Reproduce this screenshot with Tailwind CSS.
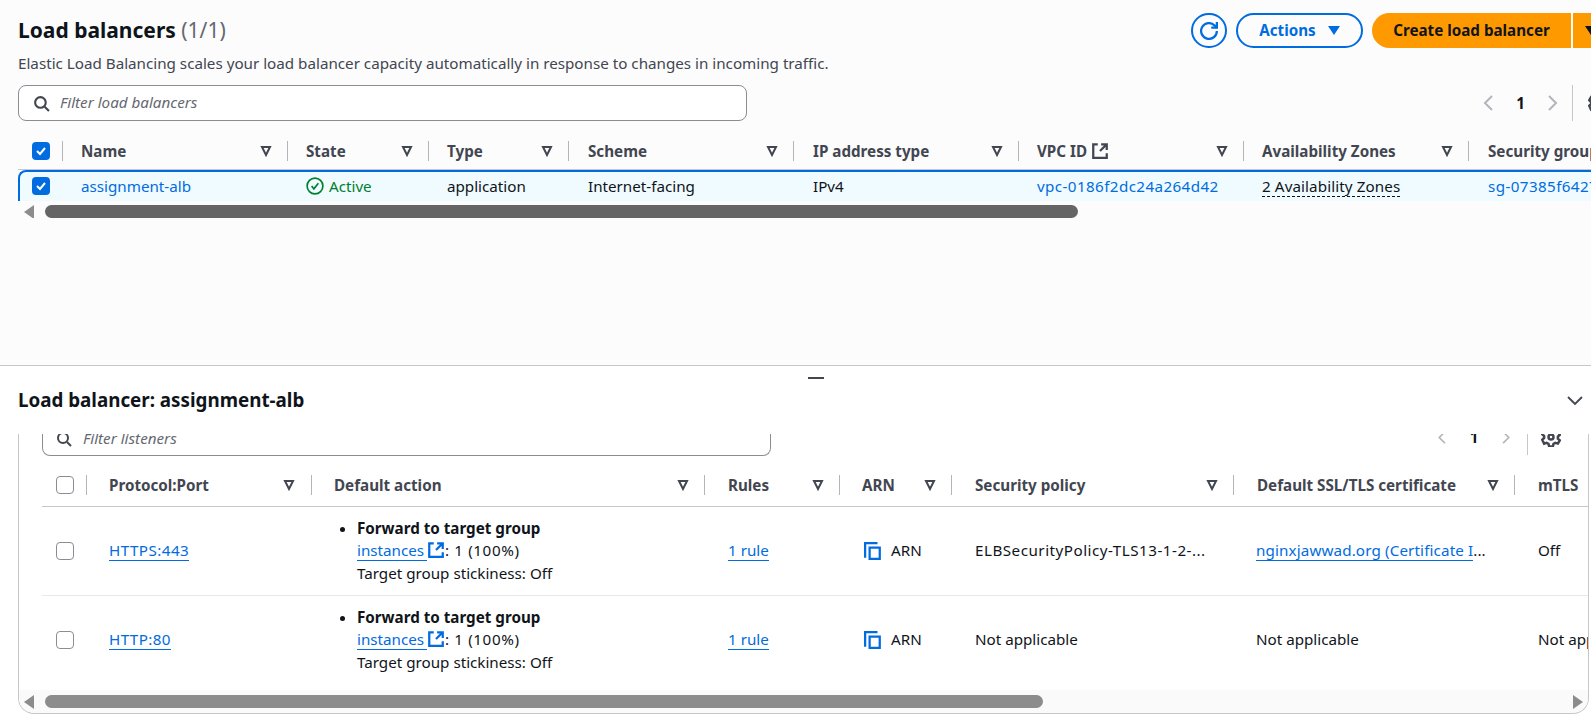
<!DOCTYPE html>
<html lang="en">
<head>
<meta charset="UTF-8">
<title>Load balancers</title>
<script src="https://cdn.jsdelivr.net/npm/@tailwindcss/browser@4"></script>
</head>
<body class="h-[715px] w-[1591px] overflow-hidden bg-white font-['Noto_Sans',sans-serif] text-[15.2px] leading-[20px] text-[#0f141a]">

<!-- top: load balancer list -->
<section class="h-[366px] overflow-hidden border-b border-[#c6c6cd] bg-[#fcfcfd]">
  <div class="flex h-[52px] items-start justify-between pl-[18px] pt-[13px]">
    <h1 class="text-[21px] leading-[34px] font-bold">Load balancers <span class="font-normal text-[#656871]">(1/1)</span></h1>
    <div class="flex items-center gap-[9px]">
      <button class="flex h-[35px] w-[36px] items-center justify-center rounded-full border-2 border-[#006ce0] text-[#006ce0]">
        <svg class="size-[18px]" viewBox="0 0 16 16" fill="none" stroke="currentColor" stroke-width="2"><path d="M15 8a7 7 0 1 1-2.05-4.95L15 5"/><path d="M15 0v5h-5"/></svg>
      </button>
      <button class="flex h-[35px] w-[127px] items-center justify-center gap-[12px] rounded-full border-2 border-[#006ce0] font-bold text-[#006ce0]"><span class="-mt-[2px]">Actions</span> <span class="h-0 w-0 border-x-[6px] border-t-[9px] border-x-transparent border-t-[#006ce0]"></span></button>
      <div class="flex h-[35px] w-[219px] font-bold">
        <button class="h-full w-[199px] shrink-0 rounded-l-full bg-[#ff9900] pb-[2px]">Create load balancer</button>
        <button class="ml-[2px] flex h-full grow items-center bg-[#ff9900] pl-[12px]"><span class="h-0 w-0 shrink-0 border-x-[6px] border-t-[9px] border-x-transparent border-t-[#0f141a]"></span></button>
      </div>
    </div>
  </div>
  <p class="pl-[18px] pt-[1px] pb-[1px] text-[#424650]">Elastic Load Balancing scales your load balancer capacity automatically in response to changes in incoming traffic.</p>
  <div class="mt-[11px] flex h-[36px] items-center justify-between pl-[18px]">
    <div class="flex h-[36px] w-[729px] items-center gap-[10px] rounded-[8px] border border-[#8c8c94] bg-white pl-[14px]">
      <svg class="size-[17px] text-[#424650]" viewBox="0 0 16 16" fill="none" stroke="currentColor" stroke-width="2"><circle cx="7" cy="7" r="5"/><path d="m11 11 4 4"/></svg>
      <span class="-mt-[2px] italic text-[#656871]">Filter load balancers</span>
    </div>
    <div class="-mr-[17px] flex h-[36px] items-center">
      <svg class="size-[16px] text-[#b4b4bb]" viewBox="0 0 16 16" fill="none" stroke="currentColor" stroke-width="2"><path d="M11 1 4 8l7 7"/></svg>
      <span class="w-[47px] text-center font-bold">1</span>
      <svg class="size-[16px] text-[#b4b4bb]" viewBox="0 0 16 16" fill="none" stroke="currentColor" stroke-width="2"><path d="m5 1 7 7-7 7"/></svg>
      <span class="ml-[12px] h-[36px] w-px bg-[#c6c6cd]"></span>
      <svg class="ml-[15px] size-[20px] shrink-0 text-[#424650]" viewBox="0 0 16 16" fill="none" stroke="currentColor" stroke-width="2"><circle cx="8" cy="8" r="2"/><path d="M6.5 1.5h3l.5 2 1.5.8 2-.6 1.5 2.6-1.5 1.4v1.6l1.5 1.4-1.5 2.6-2-.6-1.5.8-.5 2h-3l-.5-2-1.5-.8-2 .6L1 10.2l1.5-1.4V7.2L1 5.8l1.5-2.6 2 .6L6 3z"/></svg>
    </div>
  </div>

  <div class="overflow-hidden pl-[18px] pt-[12px]">
    <div class="flex h-[37px] w-[1700px] items-center border-b border-[#c6c6cd] font-bold text-[#424650]">
      <div class="flex w-[44px] items-center pl-[14px]"><span class="flex size-[18px] items-center justify-center rounded-[4px] bg-[#006ce0]"><svg class="size-[14px]" viewBox="0 0 14 14" fill="none" stroke="white" stroke-width="2"><path d="m3 7 3 3 5-6"/></svg></span></div>
      <div class="flex h-[20px] w-[225px] items-center justify-between border-l border-[#b4b4bb] pl-[18px] pr-[15px]">Name <svg class="size-[12px] text-[#424650]" viewBox="0 0 12 12" fill="none" stroke="currentColor" stroke-width="2"><path d="M2 2h8L6 10z"/></svg></div>
      <div class="flex h-[20px] w-[141px] items-center justify-between border-l border-[#b4b4bb] pl-[18px] pr-[15px]">State <svg class="size-[12px]" viewBox="0 0 12 12" fill="none" stroke="currentColor" stroke-width="2"><path d="M2 2h8L6 10z"/></svg></div>
      <div class="flex h-[20px] w-[140px] items-center justify-between border-l border-[#b4b4bb] pl-[18px] pr-[15px]">Type <svg class="size-[12px]" viewBox="0 0 12 12" fill="none" stroke="currentColor" stroke-width="2"><path d="M2 2h8L6 10z"/></svg></div>
      <div class="flex h-[20px] w-[225px] items-center justify-between border-l border-[#b4b4bb] pl-[19px] pr-[15px]">Scheme <svg class="size-[12px]" viewBox="0 0 12 12" fill="none" stroke="currentColor" stroke-width="2"><path d="M2 2h8L6 10z"/></svg></div>
      <div class="flex h-[20px] w-[225px] items-center justify-between border-l border-[#b4b4bb] pl-[19px] pr-[15px]">IP address type <svg class="size-[12px]" viewBox="0 0 12 12" fill="none" stroke="currentColor" stroke-width="2"><path d="M2 2h8L6 10z"/></svg></div>
      <div class="flex h-[20px] w-[225px] items-center justify-between border-l border-[#b4b4bb] pl-[18px] pr-[15px]"><span class="flex items-center gap-[4px]">VPC ID <svg class="size-[18px]" viewBox="0 0 16 16" fill="none" stroke="currentColor" stroke-width="2"><path d="M6 2H2v12h12v-4M9 2h5v5M14 2 8 8"/></svg></span><svg class="size-[12px]" viewBox="0 0 12 12" fill="none" stroke="currentColor" stroke-width="2"><path d="M2 2h8L6 10z"/></svg></div>
      <div class="flex h-[20px] w-[225px] items-center justify-between border-l border-[#b4b4bb] pl-[18px] pr-[15px]">Availability Zones <svg class="size-[12px]" viewBox="0 0 12 12" fill="none" stroke="currentColor" stroke-width="2"><path d="M2 2h8L6 10z"/></svg></div>
      <div class="flex h-[20px] w-[225px] items-center border-l border-[#b4b4bb] pl-[19px]">Security groups</div>
    </div>
    <div class="flex h-[31px] w-[1700px] items-center rounded-tl-[8px] border-t-2 border-l-2 border-[#006ce0] bg-[#f0fbff] pb-[2px]">
      <div class="w-[42px] pl-[12px]"><span class="flex size-[18px] items-center justify-center rounded-[4px] bg-[#006ce0]"><svg class="size-[14px]" viewBox="0 0 14 14" fill="none" stroke="white" stroke-width="2"><path d="m3 7 3 3 5-6"/></svg></span></div>
      <div class="w-[225px] pl-[19px] text-[#006ce0]">assignment-alb</div>
      <div class="flex w-[141px] items-center gap-[5px] pl-[19px] text-[#00802f]"><svg class="size-[18px]" viewBox="0 0 16 16" fill="none" stroke="currentColor" stroke-width="1.5"><circle cx="8" cy="8" r="7"/><path d="m5 8 2 2.5 4-5"/></svg>Active</div>
      <div class="w-[140px] pl-[19px]">application</div>
      <div class="w-[225px] pl-[20px]">Internet-facing</div>
      <div class="w-[225px] pl-[20px]">IPv4</div>
      <div class="w-[225px] pl-[19px] tracking-[0.4px] text-[#006ce0]">vpc-0186f2dc24a264d42</div>
      <div class="w-[225px] pl-[19px]"><span class="border-b border-dashed border-[#0f141a] tracking-[0.1px]">2 Availability Zones</span></div>
      <div class="w-[225px] whitespace-nowrap pl-[20px] tracking-[0.4px] text-[#006ce0]">sg-07385f6427a1b9c03</div>
    </div>
    <div class="mt-[4px] flex h-[13px] items-center pl-[6px]">
      <span class="h-0 w-0 border-y-[7px] border-r-[10px] border-y-transparent border-r-[#8c8c8c]"></span>
      <span class="ml-[11px] h-[13px] w-[1033px] rounded-full bg-[#656565]"></span>
    </div>
  </div>
</section>

<!-- bottom: split panel -->
<section class="relative h-[349px] overflow-hidden bg-white">
  <span class="absolute left-[808px] top-[11px] h-[2px] w-[16px] bg-[#424650]"></span>
  <div class="flex h-[68px] items-center justify-between pl-[18px] pr-[8px]">
    <h2 class="text-[18.8px] font-bold">Load balancer: assignment-alb</h2>
    <svg class="size-[16px] text-[#424650]" viewBox="0 0 16 16" fill="none" stroke="currentColor" stroke-width="1.8"><path d="m1 5 7 7 7-7"/></svg>
  </div>

  <div class="ml-[18px] mr-[2px] h-[280px] overflow-hidden rounded-b-[16px] border-x border-b border-[#c6c6cd]">
    <div class="flex h-[22px] items-start justify-between pl-[23px]">
      <div class="relative h-[22px] w-[729px] rounded-b-[8px] border-x border-b border-[#8c8c94]">
        <svg class="absolute left-[13px] top-[-3px] size-[16px] text-[#424650]" viewBox="0 0 16 16" fill="none" stroke="currentColor" stroke-width="2"><circle cx="7" cy="7" r="5"/><path d="m11 11 4 4"/></svg>
        <span class="absolute left-[40px] top-[-6px] italic text-[#656871]">Filter listeners</span>
      </div>
      <div class="-mt-[15px] flex h-[36px] items-center pr-[27px]">
        <svg class="size-[13px] text-[#b4b4bb]" viewBox="0 0 16 16" fill="none" stroke="currentColor" stroke-width="2"><path d="M11 1 4 8l7 7"/></svg>
        <span class="w-[50px] text-center font-bold">1</span>
        <svg class="size-[13px] text-[#b4b4bb]" viewBox="0 0 16 16" fill="none" stroke="currentColor" stroke-width="2"><path d="m5 1 7 7-7 7"/></svg>
        <span class="ml-[15px] h-[36px] w-px bg-[#c6c6cd]"></span>
        <svg class="ml-[13px] size-[20px] text-[#424650]" viewBox="0 0 16 16" fill="none" stroke="currentColor" stroke-width="2"><circle cx="8" cy="8" r="2"/><path d="M6.5 1.5h3l.5 2 1.5.8 2-.6 1.5 2.6-1.5 1.4v1.6l1.5 1.4-1.5 2.6-2-.6-1.5.8-.5 2h-3l-.5-2-1.5-.8-2 .6L1 10.2l1.5-1.4V7.2L1 5.8l1.5-2.6 2 .6L6 3z"/></svg>
      </div>
    </div>

    <div class="ml-[23px] w-[1700px]">
      <div class="flex h-[51px] items-center border-b border-[#c6c6cd] pt-[8px] font-bold text-[#424650]">
        <div class="w-[44px] pl-[14px]"><span class="block size-[18px] rounded-[4px] border border-[#8c8c94] bg-white"></span></div>
        <div class="flex h-[20px] w-[225px] items-center justify-between border-l border-[#b4b4bb] pl-[22px] pr-[16px]">Protocol:Port <svg class="size-[12px]" viewBox="0 0 12 12" fill="none" stroke="currentColor" stroke-width="2"><path d="M2 2h8L6 10z"/></svg></div>
        <div class="flex h-[20px] w-[393px] items-center justify-between border-l border-[#b4b4bb] pl-[22px] pr-[15px]">Default action <svg class="size-[12px]" viewBox="0 0 12 12" fill="none" stroke="currentColor" stroke-width="2"><path d="M2 2h8L6 10z"/></svg></div>
        <div class="flex h-[20px] w-[135px] items-center justify-between border-l border-[#b4b4bb] pl-[23px] pr-[15px]">Rules <svg class="size-[12px]" viewBox="0 0 12 12" fill="none" stroke="currentColor" stroke-width="2"><path d="M2 2h8L6 10z"/></svg></div>
        <div class="flex h-[20px] w-[112px] items-center justify-between border-l border-[#b4b4bb] pl-[22px] pr-[15px]">ARN <svg class="size-[12px]" viewBox="0 0 12 12" fill="none" stroke="currentColor" stroke-width="2"><path d="M2 2h8L6 10z"/></svg></div>
        <div class="flex h-[20px] w-[282px] items-center justify-between border-l border-[#b4b4bb] pl-[23px] pr-[15px]">Security policy <svg class="size-[12px]" viewBox="0 0 12 12" fill="none" stroke="currentColor" stroke-width="2"><path d="M2 2h8L6 10z"/></svg></div>
        <div class="flex h-[20px] w-[281px] items-center justify-between border-l border-[#b4b4bb] pl-[23px] pr-[15px]">Default SSL/TLS certificate <svg class="size-[12px]" viewBox="0 0 12 12" fill="none" stroke="currentColor" stroke-width="2"><path d="M2 2h8L6 10z"/></svg></div>
        <div class="flex h-[20px] w-[200px] items-center border-l border-[#b4b4bb] pl-[23px]">mTLS</div>
      </div>

      <div class="flex h-[89px] items-center border-b border-[#e8e8ec]">
        <div class="w-[44px] pl-[14px]"><span class="block size-[18px] rounded-[4px] border border-[#8c8c94] bg-white"></span></div>
        <div class="-mt-[2px] w-[225px] pl-[23px]"><span class="border-b border-[#006ce0] tracking-[0.45px] text-[#006ce0]">HTTPS:443</span></div>
        <div class="w-[393px] pl-[23px] leading-[22.5px]">
          <ul class="ml-[23px] list-disc">
            <li class="font-bold">Forward to target group</li>
          </ul>
          <p class="-mt-[1px] mb-[1px] ml-[23px] flex items-center"><span class="border-b border-[#006ce0] pr-[3px] leading-[20px] text-[#006ce0]">instances</span><svg class="size-[18px] text-[#006ce0]" viewBox="0 0 16 16" fill="none" stroke="currentColor" stroke-width="2"><path d="M6 2H2v12h12v-4M9 2h5v5M14 2 8 8"/></svg><span class="tracking-[0.6px]">: 1 (100%)</span></p>
          <p class="ml-[23px]">Target group stickiness: Off</p>
        </div>
        <div class="-mt-[2px] w-[135px] pl-[24px]"><span class="border-b border-[#006ce0] text-[#006ce0]">1 rule</span></div>
        <div class="flex w-[112px] items-center gap-[9px] pl-[25px]"><svg class="size-[18px] text-[#006ce0]" viewBox="0 0 16 16" fill="none" stroke="currentColor" stroke-width="2"><path d="M1 14V1h11"/><path d="M5 5h9v10H5z"/></svg><span class="-mt-[2px]">ARN</span></div>
        <div class="-mt-[2px] w-[282px] pl-[24px] tracking-[0.5px]">ELBSecurityPolicy-TLS13-1-2-...</div>
        <div class="-mt-[2px] w-[281px] pl-[23px]"><span class="border-b border-[#006ce0] tracking-[0.13px] text-[#006ce0]">nginxjawwad.org (Certificate I</span>...</div>
        <div class="-mt-[2px] w-[200px] pl-[24px]">Off</div>
      </div>

      <div class="flex h-[88px] items-center">
        <div class="w-[44px] pl-[14px]"><span class="block size-[18px] rounded-[4px] border border-[#8c8c94] bg-white"></span></div>
        <div class="-mt-[2px] w-[225px] pl-[23px]"><span class="border-b border-[#006ce0] tracking-[0.4px] text-[#006ce0]">HTTP:80</span></div>
        <div class="w-[393px] pl-[23px] leading-[22.5px]">
          <ul class="ml-[23px] list-disc">
            <li class="font-bold">Forward to target group</li>
          </ul>
          <p class="-mt-[1px] mb-[1px] ml-[23px] flex items-center"><span class="border-b border-[#006ce0] pr-[3px] leading-[20px] text-[#006ce0]">instances</span><svg class="size-[18px] text-[#006ce0]" viewBox="0 0 16 16" fill="none" stroke="currentColor" stroke-width="2"><path d="M6 2H2v12h12v-4M9 2h5v5M14 2 8 8"/></svg><span class="tracking-[0.6px]">: 1 (100%)</span></p>
          <p class="ml-[23px]">Target group stickiness: Off</p>
        </div>
        <div class="-mt-[2px] w-[135px] pl-[24px]"><span class="border-b border-[#006ce0] text-[#006ce0]">1 rule</span></div>
        <div class="flex w-[112px] items-center gap-[9px] pl-[25px]"><svg class="size-[18px] text-[#006ce0]" viewBox="0 0 16 16" fill="none" stroke="currentColor" stroke-width="2"><path d="M1 14V1h11"/><path d="M5 5h9v10H5z"/></svg><span class="-mt-[2px]">ARN</span></div>
        <div class="-mt-[2px] w-[282px] pl-[24px]">Not applicable</div>
        <div class="-mt-[2px] w-[281px] pl-[23px]">Not applicable</div>
        <div class="-mt-[2px] w-[200px] whitespace-nowrap pl-[24px]">Not applicable</div>
      </div>
    </div>

    <div class="mt-[6px] flex h-[23px] items-center bg-[#fafafa] px-[5px]">
      <span class="h-0 w-0 border-y-[7px] border-r-[10px] border-y-transparent border-r-[#8c8c8c]"></span>
      <span class="ml-[11px] h-[13px] w-[998px] rounded-full bg-[#8c8c8c]"></span>
      <span class="ml-auto h-0 w-0 border-y-[7px] border-l-[10px] border-y-transparent border-l-[#8c8c8c]"></span>
    </div>
  </div>
</section>
</body>
</html>
